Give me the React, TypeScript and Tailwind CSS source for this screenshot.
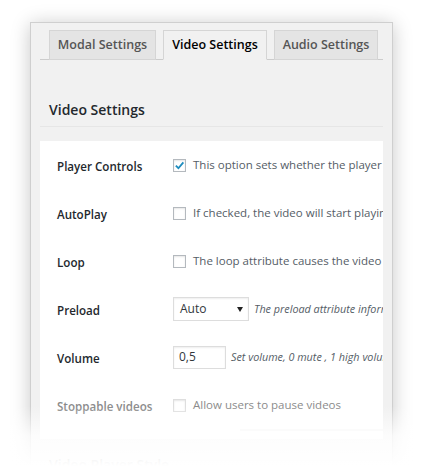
import React from "react";

const FONT = { fontFamily: '"Open Sans", "Noto Sans", Arial, sans-serif' };

function Checkbox({ checked, disabled }: { checked?: boolean; disabled?: boolean }) {
  return (
    <span
      className={`flex h-[13px] w-[13px] shrink-0 items-center justify-center border bg-white ${
        disabled ? "border-[#dedede]" : "border-[#b4b9be]"
      } shadow-[inset_0_1px_2px_rgba(0,0,0,0.1)]`}
    >
      {checked && (
        <svg width="11" height="11" viewBox="0 0 12 12">
          <path d="M2 6.2 L4.8 9 L10.2 2.6" fill="none" stroke="#1e8cbe" strokeWidth="2" />
        </svg>
      )}
    </span>
  );
}

function Row({ label, muted, children }: { label: string; muted?: boolean; children: React.ReactNode }) {
  return (
    <div className="flex h-[48px] items-center">
      <div
        className={`w-[133px] shrink-0 whitespace-nowrap pl-[17px] pt-[4px] text-[11.6px] font-semibold ${
          muted ? "text-[#8a8a8a]" : "text-[#23282d]"
        }`}
      >
        {label}
      </div>
      <div className="flex min-w-0 items-center whitespace-nowrap">{children}</div>
    </div>
  );
}

export default function App() {
  const tabs = [
    { name: "Modal Settings", w: "w-[107px]", active: false },
    { name: "Video Settings", w: "w-[104px]", active: true },
    { name: "Audio Settings", w: "w-[104px]", active: false },
  ];

  return (
    <div className="relative h-[466px] w-[422px] overflow-hidden bg-white" style={FONT}>
      <div className="ml-[30px] mt-[22px] h-[470px] w-[363px] border border-[#cfcfcf] bg-[#f1f1f1] shadow-[0_2px_18px_rgba(0,0,0,0.22)]">
        {/* tabs */}
        <div className="mx-[9px] mt-[7px] flex h-[30px] items-end gap-[7px] border-b border-[#cccccc] pl-[9px]">
          {tabs.map((t) => (
            <div
              key={t.name}
              className={`-mb-px flex h-[30px] ${t.w} items-center justify-center whitespace-nowrap border border-[#d5d5d5] text-[12.5px] font-semibold ${
                t.active
                  ? "border-b-[#f1f1f1] bg-[#f1f1f1] text-[#000000]"
                  : "bg-[#e4e4e4] text-[#555555]"
              }`}
            >
              {t.name}
            </div>
          ))}
        </div>

        <div className="mx-[9px]">
          <div className="h-[67px] border-b border-[#e6e6e6] pl-[9px] pt-[40px] text-[14px] font-semibold leading-[20px] text-[#23282d]">
            Video Settings
          </div>

          <div className="mt-[14px] overflow-hidden bg-white">
            <Row label="Player Controls">
              <Checkbox checked />
              <span className="ml-[7px] text-[11.5px] text-[#555d66]">This option sets whether the player shows controls</span>
            </Row>
            <Row label="AutoPlay">
              <Checkbox />
              <span className="ml-[7px] text-[11.5px] text-[#555d66]">If checked, the video will start playing automatically</span>
            </Row>
            <Row label="Loop">
              <Checkbox />
              <span className="ml-[7px] text-[11.5px] text-[#555d66]">The loop attribute causes the video to start over</span>
            </Row>
            <Row label="Preload">
              <div className="flex h-[24px] w-[76px] shrink-0 items-center justify-between border border-[#dddddd] bg-white pl-[6px] pr-[5px] text-[12px] text-[#32373c] shadow-[inset_0_1px_2px_rgba(0,0,0,0.07)]">
                <span>Auto</span>
                <svg width="6" height="5" viewBox="0 0 6 5">
                  <path d="M0 0 H6 L3 5 Z" fill="#222" />
                </svg>
              </div>
              <span className="ml-[5px] text-[10.8px] italic text-[#555d66]">The preload attribute informs the browser</span>
            </Row>
            <Row label="Volume">
              <div className="flex h-[23px] w-[53px] shrink-0 items-center border border-[#dddddd] bg-white pl-[5px] text-[12px] text-[#32373c] shadow-[inset_0_1px_2px_rgba(0,0,0,0.07)]">
                0,5
              </div>
              <span className="ml-[5px] text-[10.8px] italic text-[#555d66]">Set volume, 0 mute , 1 high volume</span>
            </Row>
            <Row label="Stoppable videos" muted>
              <Checkbox disabled />
              <span className="ml-[7px] text-[11.5px] text-[#8a8a8a]">Allow users to pause videos</span>
            </Row>
            <div className="ml-[200px] h-[2px] bg-[#f4f4f4]" />
            <div className="h-[8px]" />
          </div>

          <div className="pl-[9px] pt-[15px] text-[14px] font-semibold text-[#23282d]">Video Player Style</div>
        </div>
      </div>

      {/* fade at the bottom */}
      <div className="pointer-events-none absolute inset-x-0 bottom-0 h-[60px] bg-gradient-to-b from-white/0 via-white/80 to-white" />
    </div>
  );
}
